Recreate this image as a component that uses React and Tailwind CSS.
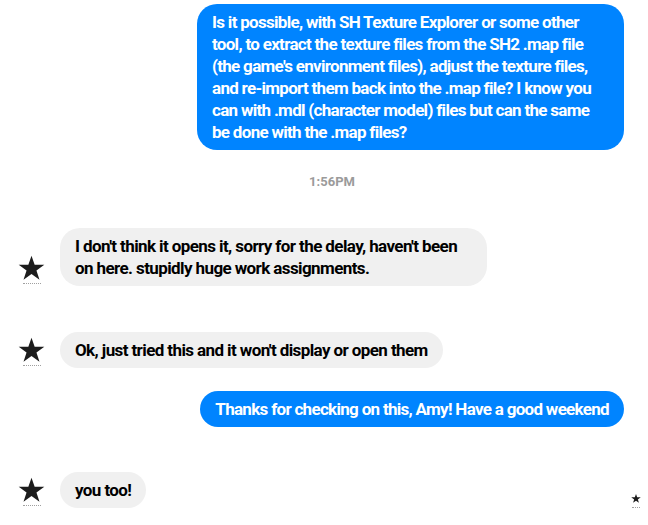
const font = { fontFamily: 'Roboto, "Liberation Sans", sans-serif' };

function StarAvatar({ w = 27, h = 26, dots = 18 }) {
    return (
        <div className="flex flex-col items-center">
            <svg viewBox="0 0 24 23" width={w} height={h}>
                <path d="M12 0.5l2.8 8.1h8.6l-7 5.1 2.7 8.2L12 16.8l-7.1 5.1 2.7-8.2-7-5.1h8.6z" fill="#1c1c1c" />
            </svg>
            <div className="mt-[2px] border-t border-dotted border-[#a0a0a0]" style={{ width: dots }} />
        </div>
    )
}

function Sent({ children, className = "" }) {
    return (
        <div className={"flex justify-end pr-[24px] " + className}>
            <div className="max-w-[427px] rounded-[20px] bg-[#0084ff] px-[15px] py-[7px] text-[17px] leading-[22px] font-bold tracking-[-0.7px] text-white">
                {children}
            </div>
        </div>
    )
}

function Received({ children, className = "" }) {
    return (
        <div className={"flex items-end gap-[15px] pl-[18px] " + className}>
            <div className="pb-[2px]">
                <StarAvatar />
            </div>
            <div className="max-w-[427px] rounded-[20px] bg-[#f0f0f0] px-[15px] py-[7px] text-[17px] leading-[22px] font-bold tracking-[-0.6px] text-black">
                {children}
            </div>
        </div>
    )
}

export default function App() {
    return (
        <div className="w-[648px] h-[525px] overflow-hidden bg-white" style={font}>
            <Sent className="pt-[4px]">
                Is it possible, with SH Texture Explorer or some other tool, to extract the texture files from the SH2 .map file (the game's environment files), adjust the texture files, and re-import them back into the .map file? I know you can with .mdl (character model) files but can the same be done with the .map files?
            </Sent>

            <p className="mt-[22px] text-center text-[13px] font-bold text-[#9b9b9b] pl-[16px]">1:56PM</p>

            <Received className="mt-[36px]">
                I don't think it opens it, sorry for the delay, haven't been on here. stupidly huge work assignments.
            </Received>

            <Received className="mt-[46px]">
                Ok, just tried this and it won't display or open them
            </Received>

            <Sent className="mt-[23px]">
                Thanks for checking on this, Amy! Have a good weekend
            </Sent>

            <div className="mt-[45px] flex items-end justify-between pr-[7px]">
                <Received>you too!</Received>
                <StarAvatar w={10} h={13} dots={8} />
            </div>
        </div>
    )
}
